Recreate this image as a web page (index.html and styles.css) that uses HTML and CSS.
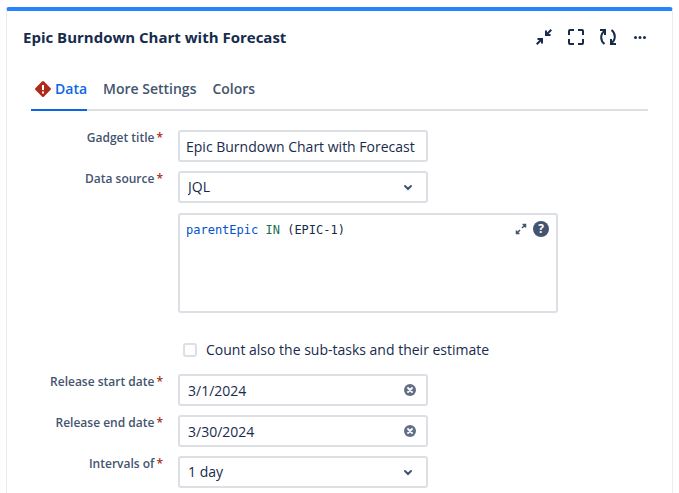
FILE: index.html
```html
<!DOCTYPE html>
<html lang="en">
<head>
    <meta charset="UTF-8">
    <meta name="viewport" content="width=device-width, initial-scale=1.0">
    <title>Epic Burndown Chart with Forecast</title>
    <link rel="stylesheet" href="styles.css">
</head>
<body>
    <main class="gadget">
        <!-- Gadget header -->
        <header class="gadget-header">
            <h1>Epic Burndown Chart with Forecast</h1>
            <div class="actions">
                <button type="button" aria-label="Minimize">
                    <svg width="16" height="16" viewBox="0 0 16 16" fill="none" stroke="currentColor" stroke-width="2"><path d="M15.300.7 10.500 5.500M10 1.500V6h4.500M.7 15.300 5.500 10.500M1.500 10H6v4.500"/><path fill="currentColor" stroke="none" d="M9 2v5h5zM7 14V9H2z"/></svg>
                </button>
                <button type="button" aria-label="Full screen">
                    <svg width="16" height="16" viewBox="0 0 16 16" fill="none" stroke="currentColor" stroke-width="2"><path d="M1 6V2a1 1 0 0 1 1-1h4M10 1h4a1 1 0 0 1 1 1v4M15 10v4a1 1 0 0 1-1 1h-4M6 15H2a1 1 0 0 1-1-1v-4"/></svg>
                </button>
                <button type="button" aria-label="Refresh">
                    <svg width="16" height="16" viewBox="0 0 16 16" fill="none" stroke="currentColor" stroke-width="2"><path d="M0 1h5v5M5 1.500C0 5 0 11.500 4.500 15M16 15h-5v-5M11 14.500C16 11 16 4.500 11.500 1"/></svg>
                </button>
                <button type="button" aria-label="More">
                    <svg width="16" height="16" viewBox="0 0 16 16" fill="currentColor"><circle cx="3.500" cy="8.500" r="1.500"/><circle cx="8" cy="8.500" r="1.500"/><circle cx="12.500" cy="8.500" r="1.500"/></svg>
                </button>
            </div>
        </header>

        <form class="settings">
            <!-- Tabs -->
            <div class="tabs" role="tablist">
                <button type="button" class="tab active" role="tab" aria-selected="true">
                    <svg width="16" height="16" viewBox="0 0 16 16"><rect x="2" y="2" width="12" height="12" rx="1.500" transform="rotate(45 8 8)" fill="#ae2a19"/><path d="M8 4v5M8 10.500v2" stroke="#fff" stroke-width="2"/></svg>
                    Data
                </button>
                <button type="button" class="tab" role="tab" aria-selected="false">More Settings</button>
                <button type="button" class="tab" role="tab" aria-selected="false">Colors</button>
            </div>

            <div class="field">
                <label for="gadgetTitle">Gadget title<span class="required">*</span></label>
                <input class="control" type="text" id="gadgetTitle" value="Epic Burndown Chart with Forecast">
            </div>

            <div class="field">
                <label for="dataSource">Data source<span class="required">*</span></label>
                <div class="select-box">
                    <select class="control indent" id="dataSource">
                        <option>JQL</option>
                        <option>Board</option>
                    </select>
                    <svg class="box-icon" width="16" height="16" viewBox="0 0 16 16" fill="none" stroke="currentColor" stroke-width="2" stroke-linecap="round"><path d="m5 7 3 3 3-3"/></svg>
                </div>
            </div>

            <div class="field query-field">
                <!-- coloured query text is drawn behind the textarea -->
                <div class="query">
                    <pre class="highlight" aria-hidden="true"><span class="name">parentEpic</span> <span class="operator">IN</span> (EPIC-1)</pre>
                    <textarea id="jql" aria-label="JQL query" spellcheck="false">parentEpic IN (EPIC-1)</textarea>
                    <div class="query-tools">
                        <button type="button" aria-label="Expand editor">
                            <svg width="12" height="12" viewBox="0 0 12 12" fill="none" stroke="currentColor" stroke-width="1.500"><path d="M7.500 1.500h3v3M10.500 1.500 7 5M4.500 10.500h-3v-3M1.500 10.500 5 7"/></svg>
                        </button>
                        <button type="button" class="help" aria-label="Syntax help">?</button>
                    </div>
                </div>
            </div>

            <div class="field check-field">
                <label class="check"><input type="checkbox"> Count also the sub-tasks and their estimate</label>
            </div>

            <div class="field">
                <label for="startDate">Release start date<span class="required">*</span></label>
                <div class="select-box">
                    <input class="control indent" type="text" id="startDate" value="3/1/2024">
                    <button type="button" class="box-icon clear" aria-label="Clear start date">
                        <svg width="12" height="12" viewBox="0 0 12 12"><circle cx="6" cy="6" r="6" fill="#626f86"/><path d="m4 4 4 4M8 4 4 8" stroke="#fff" stroke-width="1.800" stroke-linecap="round"/></svg>
                    </button>
                </div>
            </div>

            <div class="field">
                <label for="endDate">Release end date<span class="required">*</span></label>
                <div class="select-box">
                    <input class="control indent" type="text" id="endDate" value="3/30/2024">
                    <button type="button" class="box-icon clear" aria-label="Clear end date">
                        <svg width="12" height="12" viewBox="0 0 12 12"><circle cx="6" cy="6" r="6" fill="#626f86"/><path d="m4 4 4 4M8 4 4 8" stroke="#fff" stroke-width="1.800" stroke-linecap="round"/></svg>
                    </button>
                </div>
            </div>

            <div class="field">
                <label for="interval">Intervals of<span class="required">*</span></label>
                <div class="select-box">
                    <select class="control indent" id="interval">
                        <option>1 day</option>
                        <option>1 week</option>
                    </select>
                    <svg class="box-icon" width="16" height="16" viewBox="0 0 16 16" fill="none" stroke="currentColor" stroke-width="2" stroke-linecap="round"><path d="m5 7 3 3 3-3"/></svg>
                </div>
            </div>
        </form>
    </main>
</body>
</html>
```
FILE: styles.css
```css
* {
    box-sizing: border-box;
}
body {
    margin: 0;
    padding: 7px 6px 0;
    background-color: #fff;
    color: #172b4d;
    font-family: "Open Sans", "Noto Sans", sans-serif;
    font-size: 14px;
    line-height: 20px;
}
button, input, select, textarea {
    margin: 0;
    color: inherit;
    font: inherit;
}
button {
    padding: 0;
    border: none;
    background: none;
    cursor: pointer;
}
.gadget {
    min-height: calc(100vh - 7px);
    border: 1px solid #ebecf0;
    border-top: 4px solid #2684ff;
    border-bottom: none;
    border-radius: 3px 3px 0 0;
}
.gadget-header {
    display: flex;
    justify-content: space-between;
    align-items: center;
    padding: 10px 16px;
}
.gadget-header h1 {
    margin: 0;
    font-size: 15px;
    font-weight: 700;
}
.actions {
    display: flex;
}
.actions button {
    display: flex;
    justify-content: center;
    align-items: center;
    width: 32px;
    height: 32px;
}
.settings {
    padding: 10px 24px 4px;
}
/* Tabs */
.tabs {
    display: flex;
    gap: 16px;
    margin-bottom: 19px;
    box-shadow: inset 0 -2px #dcdfe4;
}
.tab {
    display: flex;
    align-items: center;
    gap: 4px;
    padding: 6px 0 10px;
    height: 38px;
    border-bottom: 2px solid transparent;
    color: #44546f;
    font-weight: 600;
}
.tab.active {
    padding-left: 4px;
    border-color: #0c66e4;
    color: #0c66e4;
}
/* Fields */
.field {
    display: grid;
    grid-template-columns: 132px minmax(0, 1fr);
    column-gap: 15px;
    margin-bottom: 9px;
}
.field > label {
    color: #44546f;
    font-size: 12px;
    font-weight: 600;
    line-height: 16px;
    text-align: right;
}
.required {
    padding-left: 2px;
    color: #ae2a19;
}
.control {
    width: 100%;
    max-width: 250px;
    height: 32px;
    padding: 0 6px;
    border: 2px solid #dcdfe4;
    border-radius: 3px;
    background-color: #fff;
    appearance: none;
}
.control.indent {
    padding-left: 8px;
}
.select-box {
    position: relative;
    max-width: 250px;
}
.box-icon {
    position: absolute;
    top: 8px;
    right: 12px;
    color: #44546f;
    pointer-events: none;
}
.box-icon.clear {
    display: flex;
    top: 10px;
    pointer-events: auto;
}
/* Query editor */
.query-field {
    margin-top: 10px;
    margin-bottom: 25px;
}
.query {
    display: grid;
    grid-column: 2;
    position: relative;
    max-width: 380px;
    height: 100px;
    border: 2px solid #dcdfe4;
    border-radius: 3px;
}
.highlight, .query textarea {
    grid-area: 1 / 1;
    margin: 0;
    padding: 6px;
    border: none;
    font-family: "DejaVu Sans Mono", monospace;
    font-size: 12px;
    line-height: 18px;
    white-space: pre-wrap;
}
.query textarea {
    background: transparent;
    color: transparent;
    caret-color: #172b4d;
    resize: none;
    outline: none;
}
.highlight .name {
    color: #0052cc;
}
.highlight .operator {
    color: #216e4e;
}
.query-tools {
    position: absolute;
    top: 6px;
    right: 7px;
    display: flex;
    align-items: center;
    gap: 6px;
    color: #44546f;
}
.query-tools button {
    display: flex;
    justify-content: center;
    align-items: center;
}
.query-tools .help {
    width: 16px;
    height: 16px;
    border-radius: 50%;
    background-color: #44546f;
    color: #fff;
    font-size: 12px;
    font-weight: 700;
}
/* Checkbox */
.check-field {
    margin-bottom: 12px;
}
.check-field .check {
    display: flex;
    grid-column: 2;
    align-items: center;
    gap: 9px;
    padding-left: 5px;
    color: #172b4d;
    font-size: 14px;
    font-weight: 400;
    line-height: 24px;
}
.check input {
    width: 14px;
    height: 14px;
    border: 2px solid #dcdfe4;
    border-radius: 3px;
    appearance: none;
}
.check input:checked {
    border-color: #0c66e4;
    background-color: #0c66e4;
}
```
